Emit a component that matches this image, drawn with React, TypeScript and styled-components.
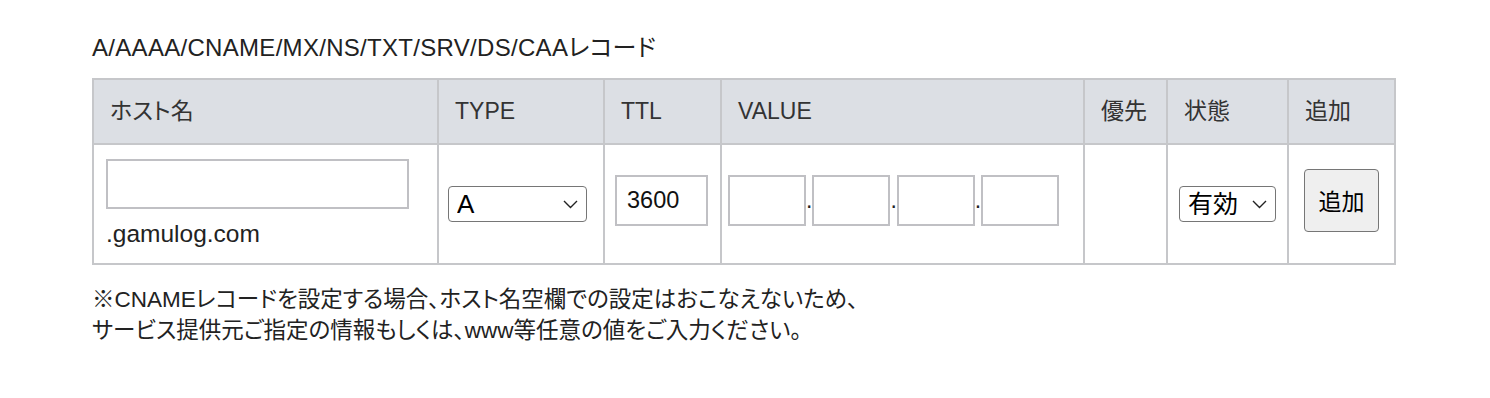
import React from "react";
import styled, { createGlobalStyle } from "styled-components";

const GlobalStyle = createGlobalStyle`
  html, body {
    margin: 0;
    padding: 0;
    background: #ffffff;
  }
  body {
    font-family: "Liberation Sans", "Noto Sans CJK JP", sans-serif;
    color: #222222;
    font-feature-settings: "palt";
  }
  * { box-sizing: border-box; }
`;

const Page = styled.div`
  padding: 31px 0 40px 92px;
`;

const Title = styled.h2`
  margin: 0 0 13px;
  font-size: 24px;
  line-height: 34px;
  font-weight: 400;
  letter-spacing: 0.3px;
  color: #222;
`;

const RecordTable = styled.table`
  border-collapse: separate;
  border-spacing: 0;
  table-layout: fixed;
  width: 1304px;
  border-top: 2px solid #c6c7ca;
  border-left: 2px solid #c6c7ca;
`;

const Th = styled.th<{ $w: number }>`
  width: ${(p) => p.$w}px;
  background: #dcdfe4;
  border-right: 2px solid #c6c7ca;
  border-bottom: 2px solid #c6c7ca;
  padding: 20px 16px;
  text-align: left;
  font-size: 23px;
  line-height: 23px;
  font-weight: 400;
  color: #333;
  white-space: nowrap;
`;

const Td = styled.td<{ $pl?: number; $lift?: boolean }>`
  height: 120px;
  border-right: 2px solid #c6c7ca;
  border-bottom: 2px solid #c6c7ca;
  padding: 0 0 ${(p) => (p.$lift ? 8 : 0)}px ${(p) => p.$pl ?? 0}px;
  vertical-align: middle;
  font-size: 23px;
`;

const TextBox = styled.input<{ $w: number }>`
  display: block;
  width: ${(p) => p.$w}px;
  height: 51px;
  border: 2px solid #c0c0c4;
  border-radius: 0;
  padding: 0 10px;
  margin: 0;
  background: #fff;
  font-family: "Liberation Sans", sans-serif;
  font-size: 23.5px;
  color: #111;
  outline: none;
`;

const HostBox = styled(TextBox)`
  height: 50px;
  margin-bottom: 10px;
`;

const Domain = styled.div`
  font-family: "Liberation Sans", sans-serif;
  font-size: 24.5px;
  line-height: 30px;
  color: #222;
`;

const ValueGroup = styled.div`
  display: flex;
  align-items: baseline;
`;

const Dot = styled.span`
  font-family: "Liberation Sans", sans-serif;
  font-size: 23px;
  line-height: 1;
  color: #222;
`;

const SelectWrap = styled.div<{ $w: number }>`
  position: relative;
  width: ${(p) => p.$w}px;
  height: 36px;
`;

const Select = styled.select<{ $fs: number }>`
  appearance: none;
  -webkit-appearance: none;
  display: block;
  width: 100%;
  height: 36px;
  margin: 0;
  padding: 0 0 0 8px;
  border: 1px solid #767676;
  border-radius: 4px;
  background: #fff;
  font-family: "Liberation Sans", "Noto Sans CJK JP", sans-serif;
  font-size: ${(p) => p.$fs}px;
  line-height: 34px;
  color: #000;
  outline: none;
`;

const Chevron = styled.svg`
  position: absolute;
  right: 9px;
  top: 14px;
  width: 15px;
  height: 9px;
  pointer-events: none;
`;

const AddButton = styled.button`
  display: block;
  width: 75px;
  height: 63px;
  margin: 0;
  padding: 0;
  border: 1px solid #767676;
  border-radius: 4px;
  background: #efefef;
  font-family: "Liberation Sans", "Noto Sans CJK JP", sans-serif;
  font-size: 23px;
  color: #000;
`;

const Note = styled.p`
  margin: 19px 0 0;
  font-size: 22.5px;
  line-height: 31px;
  color: #222;
`;

const ChevronIcon = () => (
  <Chevron viewBox="0 0 15 9" aria-hidden="true">
    <polyline points="1,1 7.5,7.5 14,1" fill="none" stroke="#222" strokeWidth="1.4" />
  </Chevron>
);

const columns: { label: string; w: number }[] = [
  { label: "ホスト名", w: 345 },
  { label: "TYPE", w: 166 },
  { label: "TTL", w: 117 },
  { label: "VALUE", w: 363 },
  { label: "優先", w: 83 },
  { label: "状態", w: 121 },
  { label: "追加", w: 107 },
];

export default function App() {
  return (
    <>
      <GlobalStyle />
      <Page>
        <Title>A/AAAA/CNAME/MX/NS/TXT/SRV/DS/CAAレコード</Title>
        <RecordTable>
          <thead>
            <tr>
              {columns.map((c) => (
                <Th key={c.label} $w={c.w}>
                  {c.label}
                </Th>
              ))}
            </tr>
          </thead>
          <tbody>
            <tr>
              <Td $pl={12}>
                <HostBox $w={303} type="text" defaultValue="" />
                <Domain>.gamulog.com</Domain>
              </Td>
              <Td $pl={9}>
                <SelectWrap $w={139}>
                  <Select $fs={26} defaultValue="A">
                    <option value="A">A</option>
                    <option value="AAAA">AAAA</option>
                    <option value="CNAME">CNAME</option>
                    <option value="MX">MX</option>
                    <option value="NS">NS</option>
                    <option value="TXT">TXT</option>
                    <option value="SRV">SRV</option>
                    <option value="DS">DS</option>
                    <option value="CAA">CAA</option>
                  </Select>
                  <ChevronIcon />
                </SelectWrap>
              </Td>
              <Td $pl={10} $lift>
                <TextBox $w={93} type="text" defaultValue="3600" />
              </Td>
              <Td $pl={6} $lift>
                <ValueGroup>
                  <TextBox $w={78} type="text" defaultValue="" />
                  <Dot>.</Dot>
                  <TextBox $w={78} type="text" defaultValue="" />
                  <Dot>.</Dot>
                  <TextBox $w={78} type="text" defaultValue="" />
                  <Dot>.</Dot>
                  <TextBox $w={78} type="text" defaultValue="" />
                </ValueGroup>
              </Td>
              <Td />
              <Td $pl={11}>
                <SelectWrap $w={97}>
                  <Select $fs={25} defaultValue="1">
                    <option value="1">有効</option>
                    <option value="0">無効</option>
                  </Select>
                  <ChevronIcon />
                </SelectWrap>
              </Td>
              <Td $pl={15} $lift>
                <AddButton type="button">追加</AddButton>
              </Td>
            </tr>
          </tbody>
        </RecordTable>
        <Note>
          ※CNAMEレコードを設定する場合、ホスト名空欄での設定はおこなえないため、
          <br />
          サービス提供元ご指定の情報もしくは、www等任意の値をご入力ください。
        </Note>
      </Page>
    </>
  );
}
